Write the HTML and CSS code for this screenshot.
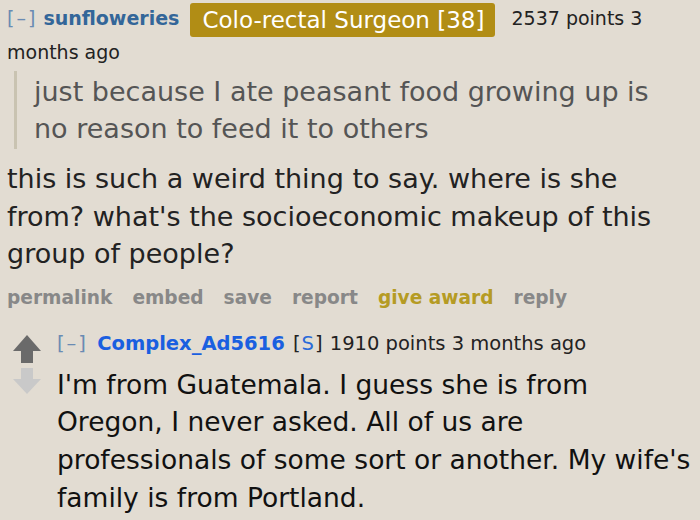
FILE: index.html
```html
<!DOCTYPE html>
<html>
<head>
<meta charset="utf-8">
<link rel="stylesheet" href="styles.css">
</head>
<body>
<div class="comment">
  <p class="tagline"><span class="expand">[–]</span> <a class="author">sunfloweries</a> <span class="flair">Colo-rectal Surgeon [38]</span> <span class="score">2537 points 3</span> <span class="score">months ago</span></p>
  <blockquote class="quote">just because I ate peasant food growing up is no reason to feed it to others</blockquote>
  <p class="body">this is such a weird thing to say. where is she from? what's the socioeconomic makeup of this group of people?</p>
  <ul class="buttons">
    <li>permalink</li>
    <li>embed</li>
    <li>save</li>
    <li>report</li>
    <li class="award">give award</li>
    <li>reply</li>
  </ul>
  <div class="child">
    <div class="arrows">
      <svg class="arrow" width="28" height="28" viewBox="0 0 28 28"><path d="M14 0 L28 16 L20 16 L20 28 L8 28 L8 16 L0 16 Z" fill="#6a6a6a"/></svg>
      <svg class="arrow" width="28" height="26" viewBox="0 0 28 26"><path d="M8 0 L20 0 L20 11 L28 11 L14 26 L0 11 L8 11 Z" fill="#c9c9c9"/></svg>
    </div>
    <div class="entry">
      <p class="tagline2"><span class="expand">[–]</span> <a class="author2">Complex_Ad5616</a> <span class="sub">[<span class="s">S</span>]</span> <span class="points">1910 points 3 months ago</span></p>
      <p class="body2">I'm from Guatemala. I guess she is from Oregon, I never asked. All of us are professionals of some sort or another. My wife's family is from Portland.</p>
    </div>
  </div>
</div>
</body>
</html>
```
FILE: styles.css
```css
html, body {
  margin: 0;
  padding: 0;
  background: #e2dcd2;
}
body {
  font-family: "DejaVu Sans", Verdana, sans-serif;
  color: #222;
  width: 700px;
  height: 520px;
  overflow: hidden;
}
.comment {
  padding: 0 0 0 7px;
}
.tagline {
  margin: 0;
  font-size: 19px;
  line-height: 30px;
  padding-top: 3px;
  padding-right: 40px;
}
.expand {
  color: #6a8bb3;
  letter-spacing: 2px;
}
.author {
  color: #336699;
  font-weight: bold;
}
.flair {
  display: inline-block;
  background: #b18d15;
  color: #fff;
  font-size: 23px;
  line-height: 34px;
  padding: 0 11px 0 12px;
  border-radius: 3px;
  margin: 0 10px 0 5px;
  vertical-align: top;
}
.score {
  color: #222;
}
.quote {
  margin: 4px 0 0 7px;
  padding: 2px 30px 2px 17px;
  border-left: 3px solid #c9c3b1;
  font-size: 27px;
  line-height: 37px;
  color: #555;
}
.body {
  margin: 11px 0 0 0;
  font-size: 27px;
  line-height: 37.5px;
  color: #222;
}
.buttons {
  list-style: none;
  margin: 13px 0 0 0;
  padding: 0;
  display: flex;
  gap: 20px;
  font-size: 18.6px;
  line-height: 24px;
  font-weight: bold;
  color: #888;
}
.buttons .award {
  color: #b59b24;
}
.child {
  display: flex;
  margin-top: 19px;
}
.arrows {
  width: 50px;
  flex: none;
  display: flex;
  flex-direction: column;
  align-items: flex-start;
  padding: 6px 0 0 6px;
  gap: 5px;
  box-sizing: border-box;
}
.entry {
  flex: 1;
  min-width: 0;
}
.tagline2 {
  margin: 0;
  font-size: 19.5px;
  line-height: 30px;
}
.tagline2 .expand {
  margin-right: 3px;
}
.author2 {
  color: #1a5fe0;
  font-weight: bold;
  margin-right: 2px;
}
.sub {
  color: #222;
  letter-spacing: 1px;
}
.s {
  color: #2a6ad9;
}
.points {
  color: #222;
}
.body2 {
  margin: 7px 0 0 0;
  font-size: 26.5px;
  line-height: 37.7px;
  color: #111;
}
```
